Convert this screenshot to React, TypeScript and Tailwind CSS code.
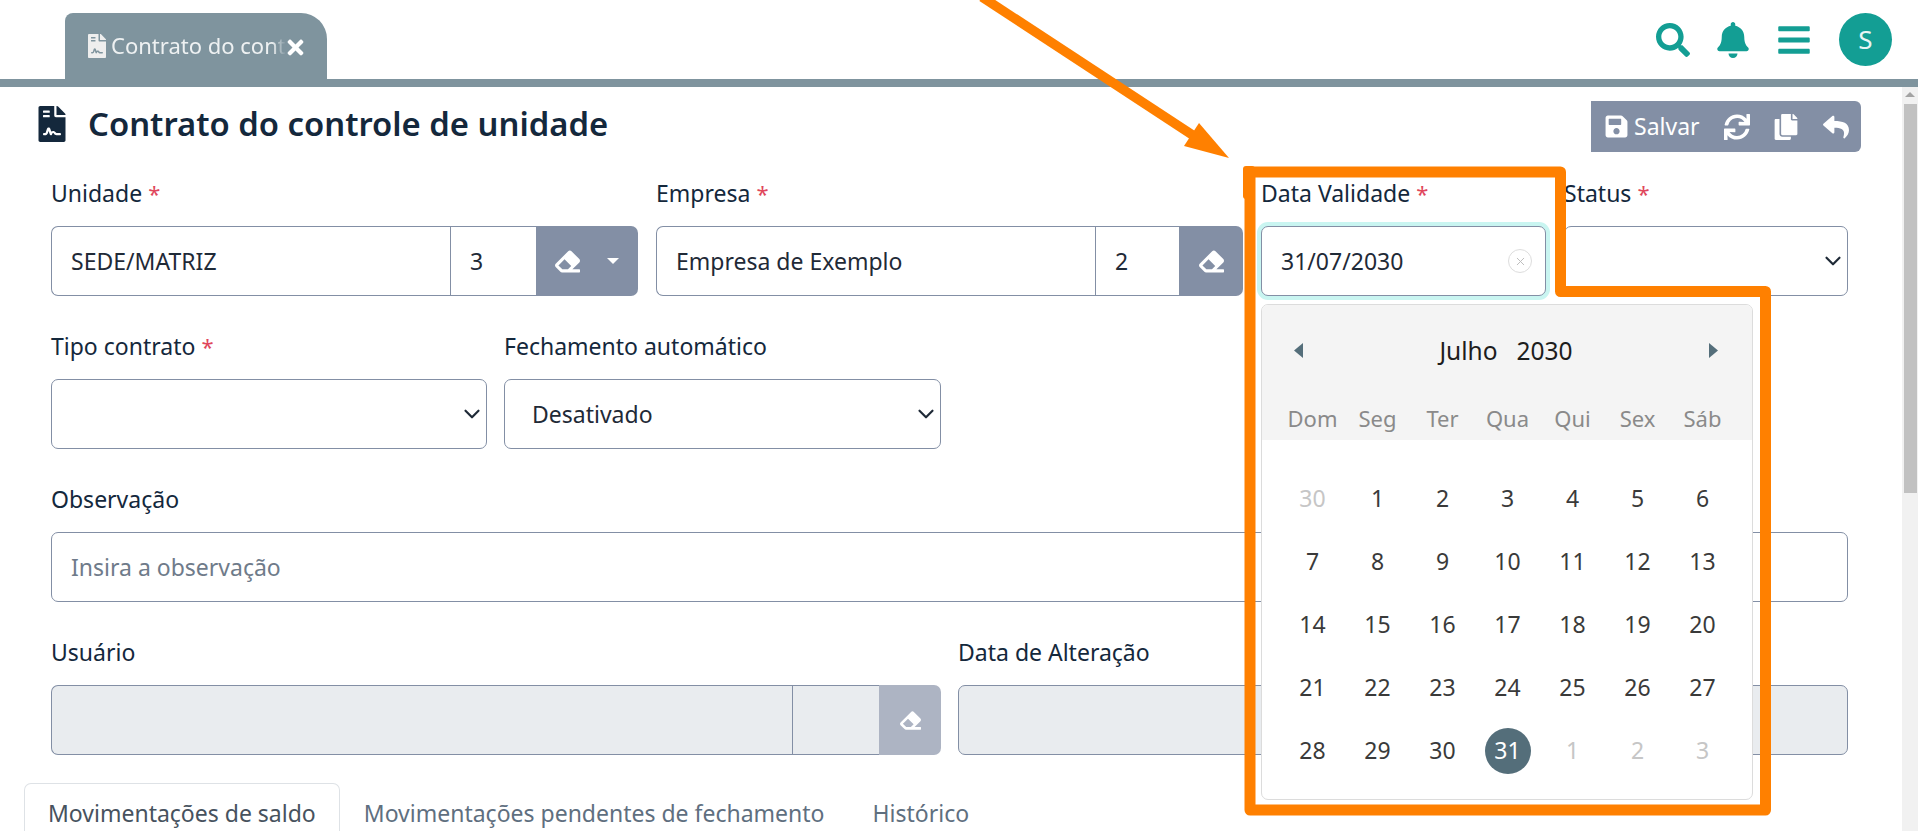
import { FaBars, FaBell, FaCopy, FaEraser, FaFileContract, FaReply, FaSave, FaSearch, FaSync, FaTimes } from "react-icons/fa";
import { ChevronDown, X } from "lucide-react";

const FIELD = "h-[70px] border border-[#838fa5] px-[19px] text-[23px] text-[#1f2a37] outline-none placeholder:text-[#6f7b8a]";

function Label({ text, required }: { text: string; required?: boolean }) {
  return (
    <label className="mb-[14px] block h-[36px] whitespace-nowrap text-[23px] leading-[35px] text-[#14283c]">
      {text}
      {required && <span className="ml-[6px] text-[22px] text-[#e0475c]">*</span>}
    </label>
  );
}

function Lookup({ label, required, value, code, idW, btnW, caret, disabled }: { label: string; required?: boolean; value: string; code: string; idW: string; btnW: string; caret?: boolean; disabled?: boolean }) {
  const bg = disabled ? "bg-[#e9ecef]" : "bg-white";
  return (
    <div className="min-w-0 flex-1">
      <Label text={label} required={required} />
      <div className="flex h-[70px]">
        <input readOnly value={value} className={`${FIELD} ${bg} min-w-0 flex-1 rounded-l-[7px] border-r-0`} />
        <input readOnly value={code} className={`${FIELD} ${bg} ${idW} rounded-none border-r-0`} />
        <div className={`${btnW} flex items-center justify-center rounded-r-[7px] ${disabled ? "bg-[#adb4c3]" : "bg-[#838fa5]"} text-white`}>
          <FaEraser className={disabled ? "text-[21px]" : "text-[25px]"} />
          {caret && <span className="ml-[27px] h-0 w-0 border-x-[6px] border-t-[6px] border-x-transparent border-t-white" />}
        </div>
      </div>
    </div>
  );
}

function SelectField({ label, required, value, width }: { label: string; required?: boolean; value?: string; width: string }) {
  return (
    <div className={width}>
      <Label text={label} required={required} />
      <div className="relative">
        <select defaultValue={value ?? ""} className={`${FIELD} w-full appearance-none rounded-[7px] bg-white pl-[27px]`}>
          <option value="">{value ?? ""}</option>
        </select>
        <ChevronDown strokeWidth={2} className="pointer-events-none absolute right-[2px] top-[22px] h-[26px] w-[26px] text-[#1f2a37]" />
      </div>
    </div>
  );
}

const WEEK = ["Dom", "Seg", "Ter", "Qua", "Qui", "Sex", "Sáb"];
const DAYS: [number, boolean][] = [
  [30, true],
  ...Array.from({ length: 31 }, (_, i): [number, boolean] => [i + 1, false]),
  [1, true],
  [2, true],
  [3, true],
];

function Calendar() {
  return (
    <div className="absolute left-0 top-[128px] z-10 h-[496px] w-[492px] overflow-hidden rounded-[7px] border border-[#dcdcdc] bg-white">
      <div className="h-[135px] bg-[#f4f4f4] px-[18px]">
        <div className="flex h-[92px] items-center justify-between pl-[14px] pr-[16px] pt-[1px]">
          <svg width="9" height="15" viewBox="0 0 9 15" className="-mt-[3px]"><polygon points="9,0 9,15 0,7.5" fill="#546e7a" /></svg>
          <div className="flex gap-[19px] text-[24.5px] leading-none text-[#1d1d1d]"><span>Julho</span><span>2030</span></div>
          <svg width="9" height="15" viewBox="0 0 9 15" className="-mt-[3px]"><polygon points="0,0 0,15 9,7.5" fill="#546e7a" /></svg>
        </div>
        <div className="grid grid-cols-[repeat(7,65px)] pt-[6px] text-center text-[22px] leading-[30px] text-[#8a8a8a]">
          {WEEK.map((d) => <span key={d}>{d}</span>)}
        </div>
      </div>
      <div className="grid grid-cols-[repeat(7,65px)] auto-rows-[63px] px-[18px] pt-[27px] text-[23px] text-[#3a3a3a]">
        {DAYS.map(([d, muted], i) => (
          <div key={i} className="flex items-center justify-center">
            <span className={`flex h-[46px] w-[46px] items-center justify-center rounded-full ${d === 31 ? "bg-[#546e7a] text-white" : ""} ${muted ? "text-[#c6c6c6]" : ""}`}>{d}</span>
          </div>
        ))}
      </div>
    </div>
  );
}

function Annotation() {
  return (
    <svg width="1918" height="831" viewBox="0 0 1918 831" className="pointer-events-none absolute left-0 top-0 z-20">
      <path d="M1250 172 H1560.5 V291.5 H1765.5 V810 H1250 Z" fill="none" stroke="#ff8000" strokeWidth="11" strokeLinejoin="round" />
      <rect x="1243" y="166" width="12" height="33" rx="3" fill="#ff8000" />
      <line x1="982" y1="-3" x2="1194" y2="136" stroke="#ff8000" strokeWidth="9.5" />
      <polygon points="1229,158 1199,123 1184,146" fill="#ff8000" />
    </svg>
  );
}

export default function App() {
  return (
    <div className="relative flex h-[831px] flex-col overflow-hidden bg-white font-['Noto_Sans','Open_Sans',sans-serif]">
      <header className="flex h-[79px] shrink-0 justify-between pl-[65px] pr-[26px]">
        <div className="mt-[13px] flex h-[66px] w-[262px] items-center rounded-tl-[8px] rounded-tr-[26px] bg-[#7f949e] pb-[1px] pl-[20px] text-[#eef1f2]">
          <FaFileContract className="shrink-0 text-[24px] text-[#eeeeee]" />
          <span className="ml-[2px] w-[175px] shrink-0 overflow-hidden whitespace-nowrap text-[22px] [mask-image:linear-gradient(to_right,black_92%,transparent)]">Contrato do controle de unidade</span>
          <FaTimes className="-ml-[2px] mt-[4px] shrink-0 text-[23px] text-white" />
        </div>
        <div className="flex items-center text-[#139e94]">
          <FaSearch className="text-[34px]" />
          <FaBell className="ml-[25px] text-[36px]" />
          <FaBars className="ml-[25px] text-[36px]" />
          <div className="ml-[27px] flex h-[53px] w-[53px] items-center justify-center rounded-full bg-[#139e94] text-[26px] text-[#e8f5f4]">S</div>
        </div>
      </header>
      <div className="h-[8px] shrink-0 bg-[#7f949e]" />
      <div className="flex min-h-0 flex-1">
        <main className="min-w-0 flex-1 pl-[51px] pr-[54px]">
          <div className="-ml-[17px] -mr-[13px] flex h-[65px] items-end justify-between">
            <div className="flex h-[51px] items-center pb-[5px]">
              <FaFileContract className="text-[36px] text-[#14283c]" />
              <h1 className="ml-[18px] whitespace-nowrap text-[32.8px] font-semibold text-[#14283c]">Contrato do controle de unidade</h1>
            </div>
            <div className="flex h-[51px] w-[270px] items-center rounded-r-[6px] bg-[#838fa5] pl-[13px] text-white">
              <FaSave className="shrink-0 text-[25px]" />
              <span className="ml-[5px] text-[23px]">Salvar</span>
              <FaSync className="ml-[24px] shrink-0 text-[26px]" />
              <FaCopy className="ml-[23px] shrink-0 text-[26px]" />
              <FaReply className="ml-[24px] shrink-0 text-[26px]" />
            </div>
          </div>
          <div className="mt-[24px] flex gap-[18px]">
            <Lookup label="Unidade" required value="SEDE/MATRIZ" code="3" idW="w-[86px]" btnW="w-[102px]" caret />
            <Lookup label="Empresa" required value="Empresa de Exemplo" code="2" idW="w-[84px]" btnW="w-[64px]" />
            <div className="relative w-[285px] shrink-0">
              <Label text="Data Validade" required />
              <div className="relative">
                <input readOnly value="31/07/2030" className={`${FIELD} w-full rounded-[7px] border-[#2ad6cf] bg-white ring-4 ring-[#c9f5f1]`} />
                <span className="absolute right-[14px] top-[23px] flex h-[24px] w-[24px] items-center justify-center rounded-full border border-[#dddddd] text-[#bbbbbb]"><X strokeWidth={1.75} className="h-[13px] w-[13px]" /></span>
              </div>
              <Calendar />
            </div>
            <SelectField label="Status" required width="w-[284px] shrink-0" />
          </div>
          <div className="mt-[33px] flex gap-[17px]">
            <SelectField label="Tipo contrato" required width="w-[436px]" />
            <SelectField label="Fechamento automático" value="Desativado" width="w-[437px]" />
          </div>
          <div className="mt-[33px]">
            <Label text="Observação" />
            <input placeholder="Insira a observação" className={`${FIELD} w-full rounded-[7px] bg-white`} />
          </div>
          <div className="mt-[33px] flex gap-[17px]">
            <Lookup label="Usuário" value="" code="" idW="w-[87px]" btnW="w-[62px]" disabled />
            <div className="min-w-0 flex-1">
              <Label text="Data de Alteração" />
              <input disabled className={`${FIELD} w-full rounded-[7px] bg-[#e9ecef]`} />
            </div>
          </div>
          <nav className="-ml-[27px] mt-[28px] flex text-[23px] text-[#5f6f7f]">
            <span className="h-[60px] rounded-t-[7px] border border-b-0 border-[#dee2e6] px-[23px] pt-[12px] text-[#47525e]">Movimentações de saldo</span>
            <span className="h-[60px] px-[24px] pt-[13px]">Movimentações pendentes de fechamento</span>
            <span className="h-[60px] px-[24px] pt-[13px]">Histórico</span>
          </nav>
        </main>
        <aside className="flex w-[16px] shrink-0 flex-col items-center bg-[#f1f1f1]">
          <span className="mt-[5px] h-0 w-0 border-x-[5px] border-b-[5px] border-x-transparent border-b-[#a3a3a3]" />
          <div className="ml-[1px] mt-[7px] h-[389px] w-[13px] bg-[#c1c1c1]" />
        </aside>
      </div>
      <Annotation />
    </div>
  );
}
